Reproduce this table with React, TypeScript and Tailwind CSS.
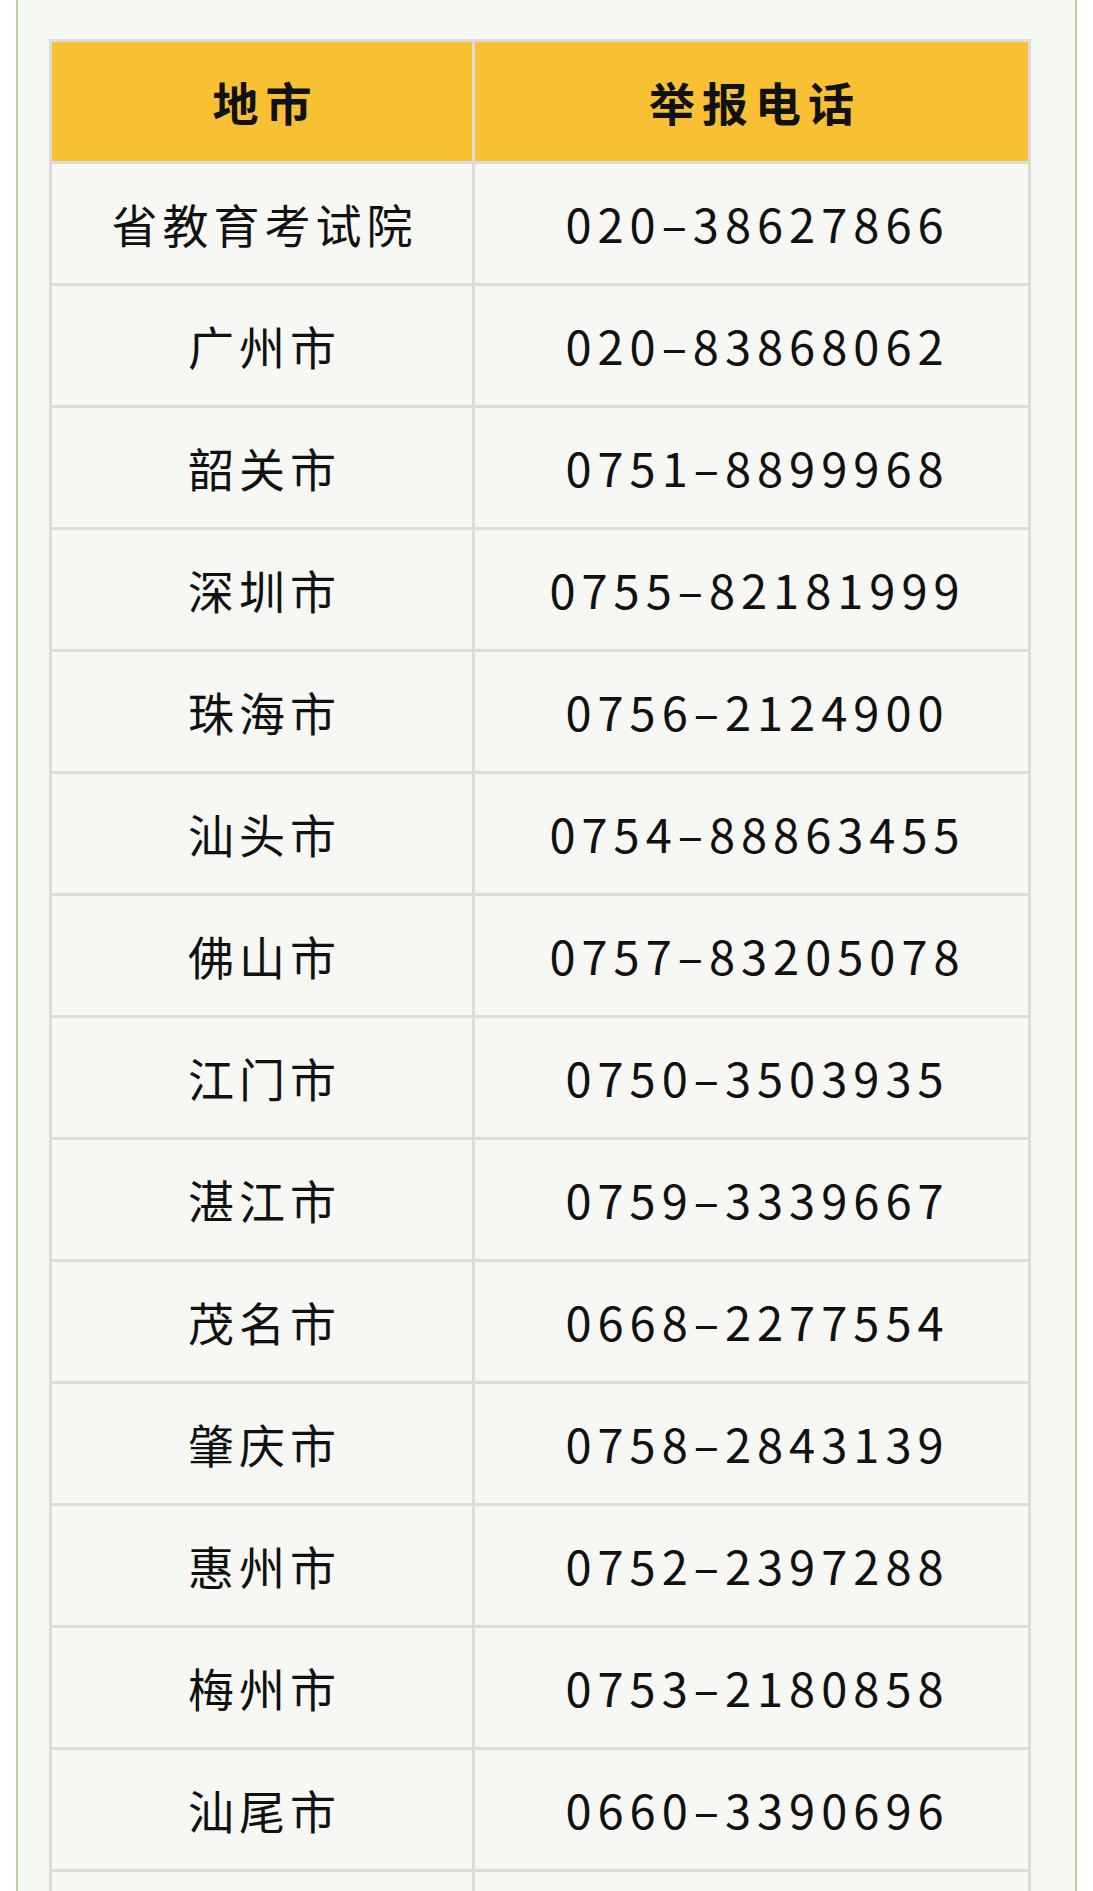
const rows: [string, string][] = [
  ["省教育考试院", "020–38627866"],
  ["广州市", "020–83868062"],
  ["韶关市", "0751–8899968"],
  ["深圳市", "0755–82181999"],
  ["珠海市", "0756–2124900"],
  ["汕头市", "0754–88863455"],
  ["佛山市", "0757–83205078"],
  ["江门市", "0750–3503935"],
  ["湛江市", "0759–3339667"],
  ["茂名市", "0668–2277554"],
  ["肇庆市", "0758–2843139"],
  ["惠州市", "0752–2397288"],
  ["梅州市", "0753–2180858"],
  ["汕尾市", "0660–3390696"],
];

const font = { fontFamily: '"Noto Sans CJK SC", "Noto Sans", sans-serif' };

export default function App() {
  return (
    <div className="h-[1891px] overflow-hidden bg-white" style={font}>
      <div className="mx-[16px] h-full border-x-2 border-[#b5d493] bg-[#f6f8f3] px-[31px] pt-[39px]">
        <div className="grid w-[982px] grid-cols-[420px_553px] gap-[3px] bg-[#dcdddb] p-[3px]">
          <div className="flex h-[119px] items-center justify-center bg-[#f8c033] pl-[7px] text-[46px] font-bold tracking-[7px] text-[#111]">
            地市
          </div>
          <div className="flex h-[119px] items-center justify-center bg-[#f8c033] pl-[7px] text-[46px] font-bold tracking-[7px] text-[#111]">
            举报电话
          </div>
          {rows.map(([city, phone], i) => (
            <div key={i} className="contents">
              <div className="flex h-[119px] items-center justify-center bg-[#f7f8f4] pl-[5px] text-[46px] tracking-[5px] text-[#111]">
                {city}
              </div>
              <div className="flex h-[119px] items-center justify-center bg-[#f7f8f4] pl-[12px] text-[47px] tracking-[6px] text-[#111]">
                {phone}
              </div>
            </div>
          ))}
          {/* next row, cut off by the bottom edge */}
          <div className="h-[119px] bg-[#f7f8f4]" />
          <div className="h-[119px] bg-[#f7f8f4]" />
        </div>
      </div>
    </div>
  );
}
